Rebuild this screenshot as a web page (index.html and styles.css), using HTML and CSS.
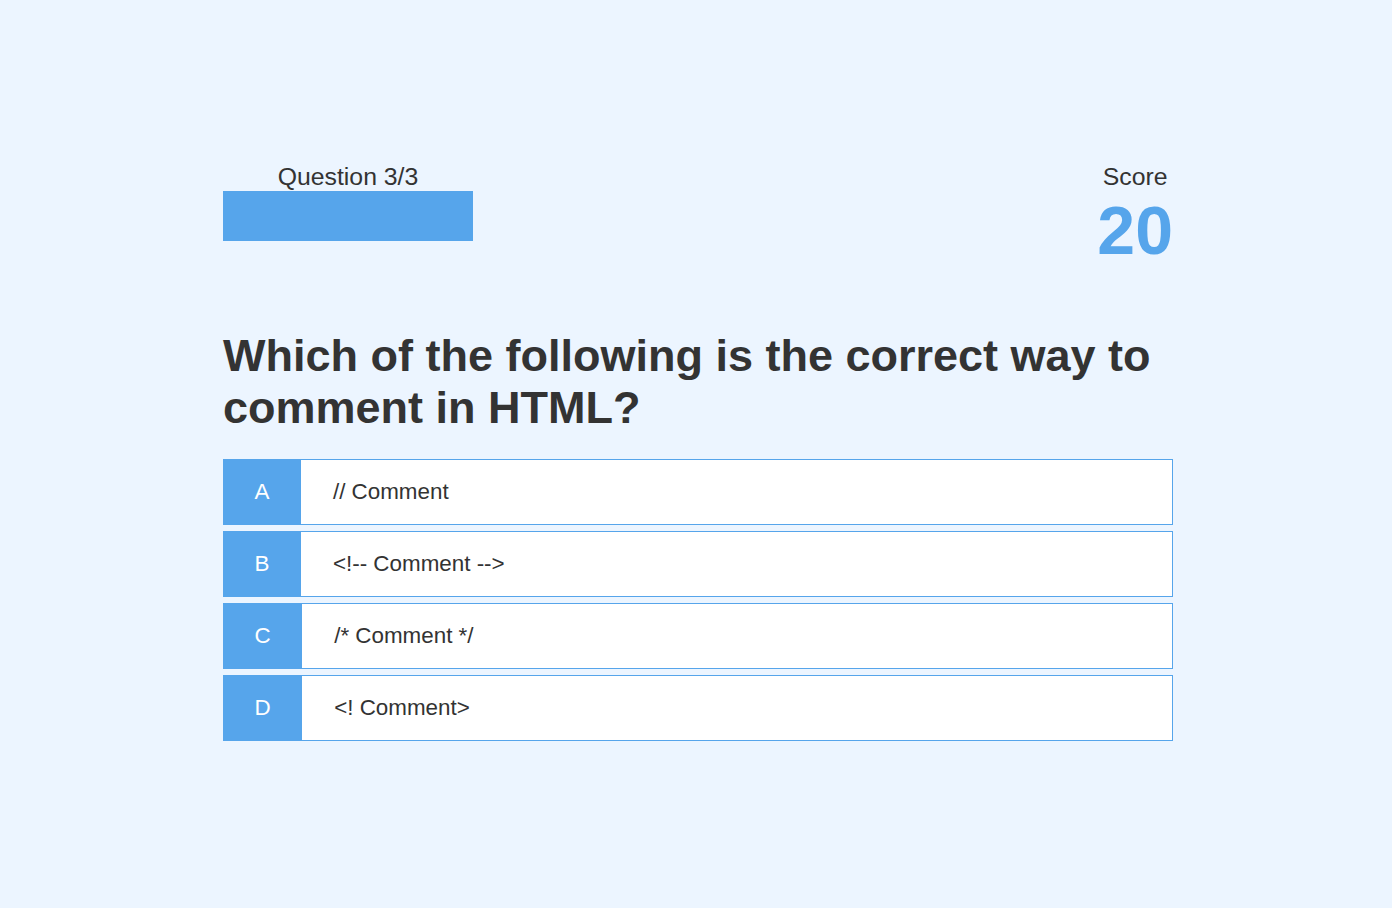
FILE: index.html
```html
<!DOCTYPE html>
<html lang="en">
<head>
<meta charset="utf-8">
<title>Quiz</title>
<link rel="stylesheet" href="styles.css">
</head>
<body>
<div class="page">
  <div class="game">
    <div class="hud">
      <div class="hud-item">
        <p class="hud-prefix">Question 3/3</p>
        <div class="progress-bar"><div class="progress-fill" style="width: 100%"></div></div>
      </div>
      <div class="hud-item hud-score">
        <p class="hud-prefix">Score</p>
        <h1 class="hud-main">20</h1>
      </div>
    </div>
    <h2 class="question">Which of the following is the correct way to comment in HTML?</h2>
    <div class="choice">
      <p class="choice-prefix">A</p>
      <p class="choice-text">// Comment</p>
    </div>
    <div class="choice">
      <p class="choice-prefix">B</p>
      <p class="choice-text">&lt;!-- Comment --&gt;</p>
    </div>
    <div class="choice">
      <p class="choice-prefix">C</p>
      <p class="choice-text">/* Comment */</p>
    </div>
    <div class="choice">
      <p class="choice-prefix">D</p>
      <p class="choice-text">&lt;! Comment&gt;</p>
    </div>
  </div>
</div>
</body>
</html>
```

FILE: styles.css
```css
html, body {
  margin: 0;
  padding: 0;
}
body {
  background: #ecf5ff;
  color: #333333;
  font-family: "Liberation Sans", Arial, sans-serif;
  min-height: 908px;
}
.page {
  display: flex;
  justify-content: center;
  padding-left: 4px;
  padding-top: 163px;
}
.game {
  width: 950px;
}
.hud {
  display: flex;
  justify-content: space-between;
  margin-bottom: 61px;
}
.hud-item {
  display: flex;
  flex-direction: column;
  align-items: center;
}
.hud-prefix {
  margin: 0;
  font-size: 24.8px;
  line-height: 28px;
  text-align: center;
}
.progress-bar {
  width: 250px;
  height: 50px;
  display: flex;
}
.progress-fill {
  height: 100%;
  background: #56a5eb;
}
.hud-main {
  margin: 0;
  font-size: 68px;
  font-weight: 700;
  color: #56a5eb;
  line-height: 78px;
}
.question {
  margin: 0 0 25px 0;
  font-size: 45px;
  line-height: 52px;
  font-weight: 700;
}
.choice {
  display: flex;
  height: 66px;
  box-sizing: border-box;
  border: 1px solid #56a5eb;
  background: #ffffff;
  margin-bottom: 6px;
  font-size: 22.4px;
}
.choice-prefix {
  margin: -1px 0 -1px -1px;
  padding: 0 31.5px;
  background: #56a5eb;
  color: #ffffff;
  display: flex;
  align-items: center;
}
.choice-text {
  margin: 0;
  padding: 0 32px;
  display: flex;
  align-items: center;
}
```
